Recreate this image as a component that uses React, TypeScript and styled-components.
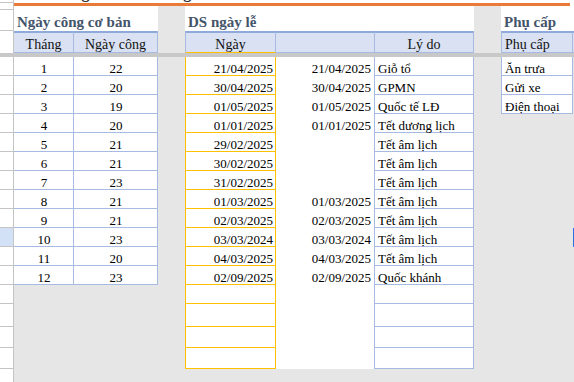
import styled, { createGlobalStyle } from 'styled-components';

const GlobalStyle = createGlobalStyle`
  html, body {
    margin: 0;
    padding: 0;
  }
  body {
    background: #e6e6e6;
    font-family: 'Liberation Serif', 'Times New Roman', serif;
  }
  * {
    box-sizing: border-box;
  }
`;

const GRID = '#c4c4c4';
const BLUE = '#a7bbe2';
const BLUE_DARK = '#8eaadb';
const YELLOW = '#ffc000';
const GRAY = '#e6e6e6';

const COL = { thang: 60, cong: 84, gap1: 27, ngay: 91, mid: 98, lydo: 100, gap2: 27, phu: 72 };

const Sheet = styled.div`
  width: 574px;
  height: 382px;
  overflow: hidden;
  background: ${GRAY};
  display: flex;
  flex-direction: column;
`;

const Row = styled.div<{ $h?: number }>`
  display: flex;
  flex-shrink: 0;
  height: ${(p) => (p.$h ? `${p.$h}px` : 'auto')};
  ${(p) => (p.$h ? '' : 'flex: 1;')}
`;

const FreezeLine = styled.div`
  height: 4px;
  flex-shrink: 0;
  background: #c8c8c8;
`;

const RowHead = styled.div<{ $active?: boolean; $line?: boolean }>`
  width: 14px;
  flex-shrink: 0;
  background: ${(p) => (p.$active ? '#d3e1f7' : '#fff')};
  border-right: 1px solid ${GRID};
  border-bottom: ${(p) => (p.$line ? `1px solid ${GRID}` : 'none')};
`;

const Gap = styled.div<{ $w?: number; $white?: boolean; $orange?: boolean }>`
  ${(p) => (p.$w ? `width: ${p.$w}px;` : 'flex: 1;')}
  flex-shrink: 0;
  background: ${(p) => (p.$white ? '#fff' : GRAY)};
  border-top: ${(p) => (p.$orange ? '3px solid #ea7a37' : 'none')};
`;

const Selection = styled.div`
  flex: 1;
  border: 2px solid #2f6fdf;
  border-right: none;
`;

// the sheet's first row is scrolled almost out of view: only descenders peek in
const Peek = styled.div`
  flex: 1;
  background: #fff;
  overflow: hidden;
`;

const PeekText = styled.div`
  margin-top: -15px;
  padding-left: 40px;
  font-size: 16px;
  font-weight: bold;
  line-height: 16px;
  white-space: nowrap;
  color: #333;
`;

const Title = styled.div<{ $w?: number }>`
  ${(p) => (p.$w ? `width: ${p.$w}px;` : 'flex: 1;')}
  flex-shrink: 0;
  background: #fff;
  display: flex;
  align-items: flex-end;
  padding-left: 3px;
  font-size: 15px;
  font-weight: bold;
  line-height: 17px;
  color: #44546a;
  white-space: nowrap;
`;

const Head = styled.div<{
  $w?: number;
  $align?: 'left' | 'center';
  $left?: boolean;
  $noRight?: boolean;
  $under?: string;
}>`
  ${(p) => (p.$w ? `width: ${p.$w}px;` : 'flex: 1;')}
  flex-shrink: 0;
  display: flex;
  align-items: flex-end;
  justify-content: ${(p) => (p.$align === 'left' ? 'flex-start' : 'center')};
  padding: 0 3px;
  background: #d9e1f2;
  border-top: 2px solid ${BLUE_DARK};
  border-left: ${(p) => (p.$left ? `1px solid ${BLUE}` : 'none')};
  border-right: ${(p) => (p.$noRight ? 'none' : `1px solid ${BLUE}`)};
  border-bottom: 1px solid ${(p) => p.$under || BLUE};
  font-size: 14px;
  line-height: 15px;
  color: #111;
  white-space: nowrap;
`;

const Cell = styled.div<{
  $w: number;
  $align?: 'left' | 'center' | 'right';
  $line?: string;
  $left?: boolean;
  $plain?: boolean;
}>`
  width: ${(p) => p.$w}px;
  flex-shrink: 0;
  display: flex;
  align-items: flex-end;
  justify-content: ${(p) =>
    p.$align === 'left' ? 'flex-start' : p.$align === 'right' ? 'flex-end' : 'center'};
  padding: 0 2px 0 3px;
  background: #fff;
  border-right: 1px solid ${(p) => (p.$plain ? 'transparent' : p.$line || BLUE)};
  border-bottom: 1px solid ${(p) => (p.$plain ? 'transparent' : p.$line || BLUE)};
  border-left: ${(p) => (p.$left ? `1px solid ${p.$line || BLUE}` : 'none')};
  font-size: 13px;
  line-height: 13px;
  color: #000;
  white-space: nowrap;
`;

const workDays = [22, 20, 19, 20, 21, 21, 23, 21, 21, 23, 20, 23];

const holidays: [string, string, string][] = [
  ['21/04/2025', '21/04/2025', 'Giỗ tổ'],
  ['30/04/2025', '30/04/2025', 'GPMN'],
  ['01/05/2025', '01/05/2025', 'Quốc tế LĐ'],
  ['01/01/2025', '01/01/2025', 'Tết dương lịch'],
  ['29/02/2025', '', 'Tết âm lịch'],
  ['30/02/2025', '', 'Tết âm lịch'],
  ['31/02/2025', '', 'Tết âm lịch'],
  ['01/03/2025', '01/03/2025', 'Tết âm lịch'],
  ['02/03/2025', '02/03/2025', 'Tết âm lịch'],
  ['03/03/2024', '03/03/2024', 'Tết âm lịch'],
  ['04/03/2025', '04/03/2025', 'Tết âm lịch'],
  ['02/09/2025', '02/09/2025', 'Quốc khánh'],
  ['', '', ''],
  ['', '', ''],
  ['', '', ''],
  ['', '', ''],
];

const rowHeights = [19, 19, 19, 19, 19, 19, 19, 19, 19, 19, 19, 19, 19, 23, 21, 21];

const allowances = ['Ăn trưa', 'Gửi xe', 'Điện thoại'];

export default function App() {
  return (
    <>
      <GlobalStyle />
      <Sheet>
        <Row $h={3}>
          <RowHead $line />
          <Peek>
            <PeekText>Bảng tham số lương</PeekText>
          </Peek>
        </Row>
        <Row $h={7}>
          <RowHead $line />
          <Gap $w={COL.thang + COL.cong} $white $orange />
          <Gap $w={COL.gap1} $orange />
          <Gap $w={COL.ngay + COL.mid + COL.lydo} $white $orange />
          <Gap $w={COL.gap2} $orange />
          <Gap $w={COL.phu - 3} $white $orange />
          <Gap $white />
        </Row>
        <Row $h={21}>
          <RowHead $line />
          <Title $w={COL.thang + COL.cong}>Ngày công cơ bản</Title>
          <Gap $w={COL.gap1} />
          <Title $w={COL.ngay + COL.mid + COL.lydo}>DS ngày lễ</Title>
          <Gap $w={COL.gap2} />
          <Title>Phụ cấp</Title>
        </Row>
        <Row $h={22}>
          <RowHead />
          <Head $w={COL.thang}>Tháng</Head>
          <Head $w={COL.cong}>Ngày công</Head>
          <Gap $w={COL.gap1} />
          <Head $w={COL.ngay} $left $under={YELLOW}>Ngày</Head>
          <Head $w={COL.mid} $noRight />
          <Head $w={COL.lydo} $left>Lý do</Head>
          <Gap $w={COL.gap2} />
          <Head $w={COL.phu} $left $align="left">Phụ cấp</Head>
          <Head $noRight />
        </Row>
        <FreezeLine />
        {holidays.map(([day, shown, reason], i) => {
          const hasWork = i < workDays.length;
          const allowance = allowances[i];
          const active = i === 9;
          return (
            <Row key={i} $h={rowHeights[i]}>
              <RowHead $line $active={active} />
              {hasWork ? (
                <>
                  <Cell $w={COL.thang}>{i + 1}</Cell>
                  <Cell $w={COL.cong}>{workDays[i]}</Cell>
                </>
              ) : (
                <Gap $w={COL.thang + COL.cong} />
              )}
              <Gap $w={COL.gap1} />
              <Cell $w={COL.ngay} $align="right" $line={YELLOW} $left>
                {day}
              </Cell>
              <Cell $w={COL.mid} $align="right" $plain>
                {shown}
              </Cell>
              <Cell $w={COL.lydo} $align="left" $left>
                {reason}
              </Cell>
              <Gap $w={COL.gap2} />
              {allowance ? (
                <Cell $w={COL.phu} $align="left" $left>
                  {allowance}
                </Cell>
              ) : (
                <Gap $w={COL.phu} />
              )}
              {active ? <Selection /> : <Gap />}
            </Row>
          );
        })}
        <Row>
          <RowHead />
          <Gap />
        </Row>
      </Sheet>
    </>
  );
}
